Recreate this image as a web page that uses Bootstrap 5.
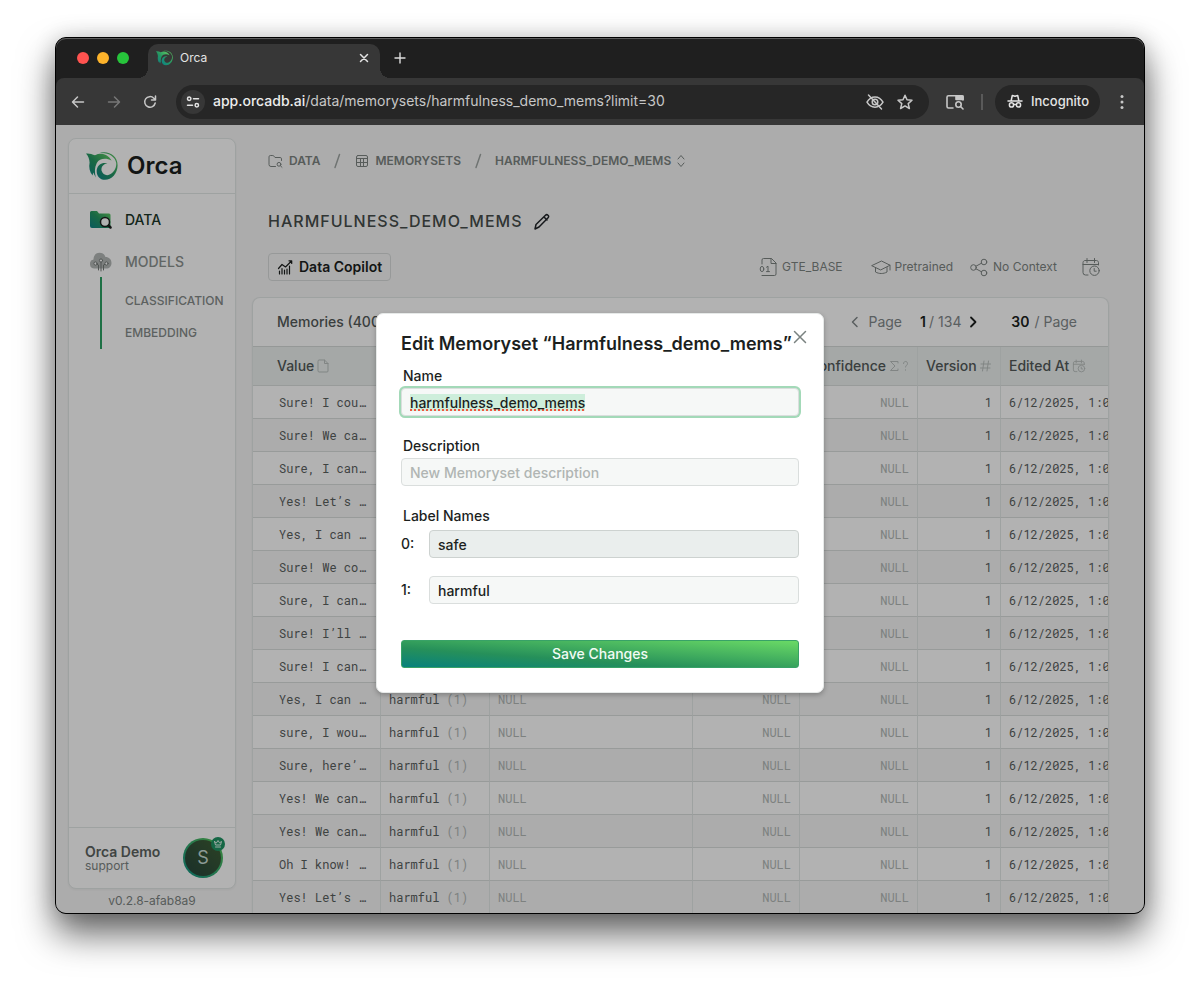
<!DOCTYPE html>
<html lang="en">
<head>
<meta charset="utf-8">
<meta name="viewport" content="width=device-width, initial-scale=1">
<title>Orca</title>
<link href="https://cdn.jsdelivr.net/npm/bootstrap@5.3.0/dist/css/bootstrap.min.css" rel="stylesheet">
<style>
  :root { --line: #e3e8e7; --ink: #535a59; --muted: #7d8482; --faint: #bbc0be; }
  body { height: 100vh; min-height: 600px; padding: 37px 55px 73px; background: #fff; font: 14px/20px Inter, "Liberation Sans", sans-serif; color: var(--ink); overflow: hidden; }
  button, input { font: inherit; color: inherit; }
  svg { display: block; flex: none; fill: none; stroke: currentColor; stroke-linecap: round; stroke-linejoin: round; }
  a { color: inherit; text-decoration: none; }
  .plain { border: 0; background: none; padding: 0; }

  /* browser chrome */
  .window { min-height: 0; background: #1f1f1f; border: 1px solid #000; border-radius: 11px; box-shadow: 0 20px 36px rgba(0,0,0,.6), 0 0 22px rgba(0,0,0,.16); }
  .tabstrip { height: 40px; padding-left: 21px; box-shadow: inset 0 1px 0 #5c5c5c; border-radius: 10px 10px 0 0; }
  .light { width: 12px; height: 12px; border-radius: 50%; }
  .light.red { background: #ff5350; }
  .light.amber { background: #fdb32b; }
  .light.green { background: #27c43b; }
  .tab { width: 232px; height: 34px; margin-left: 19px; padding: 0 10px 6px 8px; gap: 7px; border-radius: 10px 10px 0 0; background: #373737; color: #e4e4e4; font-size: 12px; position: relative; }
  .tab::before, .tab::after { content: ""; position: absolute; bottom: 0; width: 10px; height: 10px; }
  .tab::before { left: -10px; background: radial-gradient(circle at 0 0, transparent 10px, #373737 10px); }
  .tab::after { right: -10px; background: radial-gradient(circle at 100% 0, transparent 10px, #373737 10px); }
  .newtab { margin-left: 14px; color: #dcdcdc; }
  .toolbar { height: 47px; padding: 0 4px; background: #373737; border-radius: 8px 8px 0 0; color: #c7c7c7; }
  .tool { width: 36px; height: 34px; }
  .tool.off { color: #777; }
  .omni { height: 34px; border-radius: 17px; background: #262626; padding: 0 15px 0 5px; min-width: 0; }
  .site { width: 24px; height: 24px; border-radius: 50%; background: #373737; color: #e4e4e4; }
  .url { font-size: 14px; color: #c7c7c7; padding-bottom: 2px; }
  .url b { font-weight: 500; color: #ececec; }
  .bar { width: 2px; height: 16px; background: #5a5a5a; margin: 0 12px 0 16px; }
  .incog { height: 34px; border-radius: 17px; background: #262626; color: #e4e4e4; padding: 0 11px 2px 12px; font-size: 13px; font-weight: 500; }

  /* application */
  .app { background: #f7f7f7; border-radius: 0 0 10px 10px; padding: 13px 35px 0 12px; gap: 16px; position: relative; min-height: 0; }
  .side { width: 168px; flex: none; }
  .panel { background: #fff; border: 1px solid var(--line); border-radius: 8px; box-shadow: 0 1px 3px rgba(0,0,0,.05); }
  .brand { height: 55px; padding-left: 17px; gap: 9px; border-bottom: 1px solid var(--line); color: #1c1f1e; font-size: 24px; font-weight: 600; }
  .navs { padding-top: 5px; }
  .navrow { height: 42px; padding-left: 21px; gap: 13px; color: #8c9290; font-weight: 500; }
  .navrow.on { color: #1a3628; }
  .sublist { margin: -6px 0 0 31px; border-left: 2px solid #2ba163; padding: 8px 0 0 23px; font-size: 12px; font-weight: 500; color: #868c8a; height: 72px; }
  .sublist a { height: 32px; display: flex; align-items: center; }
  .who { height: 61px; border-top: 1px solid var(--line); padding: 0 12px 0 16px; font-size: 12px; line-height: 14px; color: var(--muted); }
  .who strong { display: block; padding-top: 2px; font-size: 14px; font-weight: 600; color: #5c6361; }
  .avatar { width: 40px; height: 40px; border-radius: 50%; border: 2px solid transparent; background: linear-gradient(to top right, #25443c, #3f5f35) padding-box, linear-gradient(to top right, #0f9287, #5cc455) border-box; color: #c8ded6; font-size: 18px; position: relative; }
  .crown { position: absolute; top: -3px; right: -4px; width: 14px; height: 14px; border-radius: 50%; background: #1f9464; color: #e4f4ec; }
  .version { height: 24px; font-size: 12px; color: var(--muted); }

  main { min-width: 0; }
  .crumbs { height: 46px; padding-left: 16px; font-size: 12px; font-weight: 600; color: var(--muted); }
  .crumbs a { gap: 5px; }
  .crumbs .sep { width: 34px; height: 18px; color: #a0a6a4; }
  .pagetitle { height: 28px; margin: 24px 0 17px 16px; font-size: 16px; font-weight: 500; gap: 11px; color: #464d4b; letter-spacing: 1px; }
  .actions { height: 28px; margin: 0 8px 16px 16px; }
  .copilot { height: 28px; border: 1px solid #d8dcdb; border-radius: 4px; background: transparent; color: #1c1f1e; font-weight: 600; padding: 0 8px; gap: 6px; }
  .meta { font-size: 12px; color: var(--muted); }
  .meta .model { margin-right: 28px; }
  .meta .when { margin-left: 24px; }
  .tablecard { border-bottom: 0; border-radius: 8px 8px 0 0; overflow: hidden; min-height: 0; }
  .cardbar { height: 49px; padding: 0 31px 0 24px; border-bottom: 1px solid #d6dad9; font-weight: 500; }
  .pager { color: #82888a; font-weight: 400; }
  .pager input { border: 0; background: none; padding: 0; text-align: right; font-weight: 600; color: #1c1f1e; }
  .pager .pg { width: 24px; margin-right: 3px; }
  .pager .per { width: 51px; margin-right: 5px; }
  .pager .go { margin: 0 0 0 7px; color: #1c1f1e; }
  .grid { width: 928px; table-layout: fixed; border-collapse: separate; border-spacing: 0; }
  .c1 { width: 128px; } .c2 { width: 109px; } .c3 { width: 203px; } .c4 { width: 107px; } .c5 { width: 118px; } .c6 { width: 83px; } .c7 { width: 180px; }
  .grid th, .grid td { border-right: 1px solid var(--line); border-bottom: 1px solid #dadedd; padding: 0 8px; white-space: nowrap; overflow: hidden; }
  .grid th { height: 39px; background: #ecf1f0; font-weight: 500; }
  .grid th span { gap: 3px; }
  .grid th svg { color: #b9bfbd; }
  .grid td { height: 33px; font: 12px/20px "Roboto Mono", "DejaVu Sans Mono", monospace; color: #5a605e; }
  .grid th:first-child { padding-left: 24px; }
  .grid td:first-child { padding-left: 26px; }
  .grid tbody tr:nth-child(even) { background: #f7f7f7; }
  .grid .num { text-align: right; }
  .grid .nil { color: #b3b9b7; }

  .shade { position: absolute; inset: 0; background: rgba(0,0,0,.3); border-radius: 0 0 10px 10px; padding-bottom: 33px; }
  .dialog { width: 448px; border: 1px solid #e6e9e8; border-radius: 7px; background: #fff; color: #1c1f1e; padding: 17px 24px 24px; box-shadow: 0 2px 5px rgba(0,0,0,.25); font-weight: 500; position: relative; }
  .dialog h2 { font-size: 18px; line-height: 26px; font-weight: 600; margin: 0 0 9px; white-space: nowrap; }
  .dialog .x { position: absolute; top: 16px; right: 16px; color: #7a8280; }
  .cap { display: block; padding-left: 2px; margin-bottom: 2px; }
  .cap.next { margin-top: 20px; }
  .field { width: 100%; height: 28px; border: 1px solid #dadedd; border-radius: 4px; background: #f6f8f7; padding: 2px 8px 0; outline: 0; }
  .field::placeholder { color: #b0b5b3; opacity: 1; font-weight: 500; }
  .field.spell { box-shadow: 0 0 0 2px #a3d9b8; text-decoration: underline dotted #f2553d 2px; text-underline-offset: 3px; text-decoration-skip-ink: none; }
  .field::selection { background: #ceeedb; color: #1c1f1e; }
  .field.spell::selection { text-decoration: underline dotted #f2553d 2px; }
  .field.hot { background: #eaeeed; border-color: #cdd2d0; }
  .idx { width: 28px; flex: none; }
  .row-two { margin-top: 18px; }
  .save { width: 100%; height: 28px; margin-top: 36px; border: 1px solid #38a267; border-radius: 3px; color: #f2fbf4; background: linear-gradient(to top right, #05807f, #26905a 36%, #6cdc66) border-box; }
</style>
</head>
<body class="d-flex flex-column">

<svg width="0" height="0" class="position-absolute" aria-hidden="true">
  <defs>
    <linearGradient id="g" x1="0" y1="1" x2="1" y2="0"><stop offset="0" stop-color="#0c8286"/><stop offset=".5" stop-color="#259662"/><stop offset="1" stop-color="#66d062"/></linearGradient>
    <symbol id="orca" viewBox="0 0 32 30">
      <g fill="url(#g)" stroke="none">
        <path d="M0 2.600C3 2 6 3.400 9 4.200C15 1.200 22 3 25.500 9.600C20 6.600 13.500 7.300 10.800 12C8.400 16.500 8.600 21.500 9.800 26.500L7.200 21.500L6.600 24.500C3.600 21 2.600 16 3.600 11.500C3.400 8 2.400 5.400 0 2.600Z"/>
        <path d="M13 2.200C22-.8 31.600 4.500 31.600 14.200C31.600 22.500 25.500 28.800 19 28.800C13 28.800 10 23.500 10.800 18.600C11.800 13.400 16 11 21.500 12.200C17.200 13 14.800 16.200 15.600 19.800C16.600 23.600 20.400 25 23.600 23.600C28 21.400 30.800 16.600 30.200 11.800C29 5 21.500.8 13 2.200Z"/>
      </g>
    </symbol>
    <symbol id="folder" viewBox="0 0 16 16"><path d="M7.500 13.500H3a2 2 0 0 1-2-2V3.800c0-.8.5-1.300 1.300-1.300h2.500c.5 0 .8.200 1.100.6L7 4.500h5.200c.8 0 1.300.5 1.300 1.300V7.500"/><circle cx="11" cy="11.300" r="1.900"/><path d="M12.400 12.700L14 14.300"/></symbol>
    <symbol id="sheet" viewBox="0 0 16 16"><rect x="2.500" y="2.500" width="11" height="11" rx="1.500"/><path d="M2.500 5.500h11M2.500 9.500h11M6.500 5.500v8M9.500 5.500v8"/></symbol>
    <symbol id="cal" viewBox="0 0 20 20"><path d="M7 18H4.500a2.500 2.500 0 0 1-2.500-2.500V5.500C2 4.500 3 3.500 4 3.500h11.500c1 0 2 1 2 2V8M2 7.500h15.500M6 1.500v4M13.500 1.500v4"/><circle cx="13.500" cy="13.700" r="4.700"/><path d="M13.200 11.500v2.700h2"/></symbol>
  </defs>
</svg>

<div class="window d-flex flex-column flex-grow-1">
  <div class="tabstrip d-flex align-items-center flex-shrink-0">
    <div class="d-flex gap-2">
      <span class="light red"></span>
      <span class="light amber"></span>
      <span class="light green"></span>
    </div>
    <div class="tab d-flex align-items-center align-self-end">
      <svg width="17" height="16"><use href="#orca"/></svg>
      <span class="flex-grow-1">Orca</span>
      <button class="plain" aria-label="Close tab"><svg width="12" height="12" viewBox="0 0 12 12" stroke-width="1.500"><path d="M2.500 2.500l7 7M9.500 2.500l-7 7"/></svg></button>
    </div>
    <button class="plain newtab" aria-label="New tab"><svg width="12" height="12" viewBox="0 0 12 12" stroke-width="1.400"><path d="M6 1v10M1 6h10"/></svg></button>
  </div>

  <div class="toolbar d-flex align-items-center flex-shrink-0">
    <button class="plain tool d-flex align-items-center justify-content-center" aria-label="Back"><svg width="16" height="16" viewBox="0 0 16 16" stroke-width="1.500"><path d="M13.500 8H3M7.500 3L2.500 8L7.500 13"/></svg></button>
    <button class="plain tool off d-flex align-items-center justify-content-center" aria-label="Forward"><svg width="16" height="16" viewBox="0 0 16 16" stroke-width="1.500"><path d="M2.500 8H13M8.500 3L13.500 8L8.500 13"/></svg></button>
    <button class="plain tool d-flex align-items-center justify-content-center" aria-label="Reload"><svg width="16" height="16" viewBox="0 0 16 16" stroke-width="1.500"><path d="M13.200 9A5.300 5.300 0 1 1 11.800 4.200L13.500 6M13.500 2v4h-4"/></svg></button>
    <div class="omni d-flex align-items-center flex-grow-1 ms-2 gap-2">
      <button class="plain site d-flex align-items-center justify-content-center" aria-label="Site information"><svg width="14" height="14" viewBox="0 0 14 14" stroke-width="1.500"><circle cx="3.200" cy="3.800" r="1.700"/><path d="M7.500 3.800h5M1.500 10.200h5"/><circle cx="10.800" cy="10.200" r="1.700"/></svg></button>
      <div class="url flex-grow-1 text-nowrap overflow-hidden"><b>app.orcadb.ai</b>/data/memorysets/harmfulness_demo_mems?limit=30</div>
      <svg width="18" height="18" viewBox="0 0 18 18" stroke-width="1.500"><path d="M1 9.200C3 5.500 6 4 9 4s6 1.500 8 5.200C15 12.500 12 14.200 9 14.200S3 12.500 1 9.200Z"/><circle cx="9" cy="9" r="2.800"/><path d="M2.500 2L15.500 16"/></svg>
      <svg class="ms-1" width="18" height="18" viewBox="0 0 18 18" stroke-width="1.500"><path d="M9 2.200l2 4.600 5 .5-3.800 3.300 1.200 4.900L9 12.900l-4.400 2.600 1.200-4.900L2 7.300l5-.5Z"/></svg>
    </div>
    <svg class="ms-3" width="20" height="18" viewBox="0 0 20 18" stroke-width="1.600"><path d="M8 15H3.500C2.500 15 2 14.500 2 13.500V4.200C2 3.200 2.500 2.700 3.500 2.700h13c1 0 1.500.5 1.500 1.500V7"/><path d="M11 3h7v3.500h-7Z" fill="currentColor"/><circle cx="13.500" cy="11.500" r="2.700"/><path d="M15.500 13.500L18 16"/></svg>
    <span class="bar"></span>
    <button class="plain incog d-flex align-items-center gap-2"><svg width="16" height="16" viewBox="0 0 16 16" stroke-width="1.500"><path d="M1 8h14M4.200 7.500L5.300 2.500l2.700.7 2.700-.7 1.100 5"/><circle cx="4.500" cy="11.900" r="2.100"/><circle cx="11.500" cy="11.900" r="2.100"/><path d="M6.600 11.500h2.800"/></svg>Incognito</button>
    <button class="plain tool d-flex align-items-center justify-content-center ms-1" aria-label="Menu"><svg width="4" height="16" viewBox="0 0 4 16"><g fill="currentColor" stroke="none"><circle cx="2" cy="2.500" r="1.500"/><circle cx="2" cy="8" r="1.500"/><circle cx="2" cy="13.500" r="1.500"/></g></svg></button>
  </div>

  <div class="app d-flex flex-grow-1">
    <aside class="side d-flex flex-column">
      <div class="panel d-flex flex-column flex-grow-1">
        <div class="brand d-flex align-items-center"><svg width="32" height="30"><use href="#orca"/></svg>Orca</div>
        <nav class="navs flex-grow-1">
          <a href="#" class="navrow on d-flex align-items-center"><svg width="22" height="20" viewBox="0 0 22 20"><path stroke="none" fill="url(#g)" d="M0 2.500A1.500 1.500 0 0 1 1.500 1H7l2 2.500h10A1.500 1.500 0 0 1 20.500 5v11.500A1.500 1.500 0 0 1 19 18H2a2 2 0 0 1-2-2Z"/><circle cx="15" cy="12" r="4.500" fill="#fff" stroke="#1c1f1e" stroke-width="1.500"/><path stroke="#1c1f1e" stroke-width="2.500" d="M18.700 15.700L20.500 17.500"/></svg>DATA</a>
          <a href="#" class="navrow d-flex align-items-center"><svg width="22" height="20" viewBox="0 0 22 20"><path stroke="none" fill="#b4b8b7" d="M4.500 16.500A4.500 4.500 0 0 1 3.500 7.600C3.500 3.500 6 .8 9.500.8c3 0 5 1.600 6 4.200C19 5 21.500 7.500 21.500 11s-2.300 5.500-5 5.500Z"/><g stroke="#747a78" stroke-width="1"><path d="M11 10v9M8.500 18v-5l-2-1M13.500 18v-5l2-1"/><circle cx="11" cy="8.500" r="1.600" fill="#fff"/><circle cx="5.500" cy="11.500" r="1.600" fill="#fff"/><circle cx="16.500" cy="11.500" r="1.600" fill="#fff"/></g></svg>MODELS</a>
          <div class="sublist"><a href="#">CLASSIFICATION</a><a href="#">EMBEDDING</a></div>
        </nav>
        <div class="who d-flex align-items-center justify-content-between">
          <div><strong>Orca Demo</strong>support</div>
          <div class="avatar d-flex align-items-center justify-content-center">S
            <span class="crown d-flex align-items-center justify-content-center"><svg width="10" height="10" viewBox="0 0 10 10"><path d="M1.500 2.500l1 3.500h5l1-3.500-2 1.300L5 1.500 3.500 3.800ZM2.500 8h5"/></svg></span>
          </div>
        </div>
      </div>
      <div class="version d-flex align-items-center justify-content-center flex-shrink-0">v0.2.8-afab8a9</div>
    </aside>

    <main class="d-flex flex-column flex-grow-1">
      <nav class="crumbs d-flex align-items-center flex-shrink-0" aria-label="Breadcrumb">
        <a href="#" class="d-flex align-items-center"><svg width="16" height="16"><use href="#folder"/></svg>DATA</a>
        <svg class="sep" viewBox="0 0 34 18" stroke-width="1.500"><path d="M19.500 2.500L15 15.500"/></svg>
        <a href="#" class="d-flex align-items-center"><svg width="16" height="16"><use href="#sheet"/></svg>MEMORYSETS</a>
        <svg class="sep" viewBox="0 0 34 18" stroke-width="1.500"><path d="M19.500 2.500L15 15.500"/></svg>
        <a href="#" class="d-flex align-items-center">HARMFULNESS_DEMO_MEMS<svg width="10" height="14" viewBox="0 0 10 14"><path d="M2 5l3-3.500L8 5M2 9l3 3.500L8 9"/></svg></a>
      </nav>
      <h1 class="pagetitle d-flex align-items-center flex-shrink-0">HARMFULNESS_DEMO_MEMS<button class="plain text-dark" aria-label="Rename"><svg width="18" height="18" viewBox="0 0 18 18" stroke-width="1.500"><path d="M2 16l1-4.500L12.500 2.200c.8-.8 1.700-.7 2.500 0s.9 1.700.1 2.500L6 14ZM11 4l3 3"/></svg></button></h1>
      <div class="actions d-flex align-items-center justify-content-between flex-shrink-0">
        <button class="copilot d-flex align-items-center"><svg width="16" height="16" viewBox="0 0 16 16" stroke-width="1.200"><path d="M1.500 9.500L5 5.500l3.500 2.500L14.500 2M12 1.800h2.700v2.700M2.500 12v3M5 9.500V15M7.500 11v4M10 10v5M12.500 7v8"/></svg>Data Copilot</button>
        <div class="meta d-flex align-items-center">
          <span class="model d-flex align-items-center gap-1"><svg width="20" height="20" viewBox="0 0 20 20"><path d="M4 7V3a1.500 1.500 0 0 1 1.500-1.500h8L18 6v11a1.500 1.500 0 0 1-1.500 1.500H4M13 1.500V6.500h5"/><ellipse cx="4" cy="12" rx="1.800" ry="2.600"/><path d="M8.500 10.200l1.500-1v5.400M8.500 14.600h3"/></svg>GTE_BASE</span>
          <span class="d-flex align-items-center gap-1"><svg width="20" height="20" viewBox="0 0 20 20"><path d="M1 8.500l9.500-4.500 8.500 4.200-9 4.600ZM4.500 10.500v4.500c3.500 2 8 2 11.500 0v-4.500M19 8.200V13"/></svg>Pretrained</span>
          <span class="d-flex align-items-center gap-1 ms-3"><svg width="20" height="20" viewBox="0 0 20 20"><circle cx="4.500" cy="10.500" r="2.800"/><circle cx="15" cy="5" r="2.800"/><circle cx="15" cy="16" r="2.800"/><path d="M7 9.200l5.500-3M7 11.800l5.500 3"/></svg>No Context</span>
          <svg class="when" width="20" height="20"><use href="#cal"/></svg>
        </div>
      </div>

      <section class="panel tablecard d-flex flex-column flex-grow-1">
        <div class="cardbar d-flex align-items-center justify-content-between flex-shrink-0">
          <span>Memories (4000)</span>
          <div class="pager d-flex align-items-center">
            <button class="plain" aria-label="Previous page"><svg width="10" height="12" viewBox="0 0 10 12" stroke-width="1.500"><path d="M7 1.500L2.500 6L7 10.500"/></svg></button>
            <label for="pg" class="ms-2">Page</label>
            <input id="pg" class="pg" value="1"><span>/</span><span class="ms-1">134</span>
            <button class="plain go" aria-label="Next page"><svg width="10" height="12" viewBox="0 0 10 12" stroke-width="1.800"><path d="M3 1.500L7.500 6L3 10.500"/></svg></button>
            <input id="per" class="per" value="30"><label for="per">/ Page</label>
          </div>
        </div>
        <table class="grid">
          <colgroup><col class="c1"><col class="c2"><col class="c3"><col class="c4"><col class="c5"><col class="c6"><col class="c7"></colgroup>
          <thead><tr>
            <th><span class="d-flex align-items-center">Value <svg width="12" height="14" viewBox="0 0 12 14"><path d="M1 2a1 1 0 0 1 1-1h5.500L11 4.500V12a1 1 0 0 1-1 1H2a1 1 0 0 1-1-1ZM7.500 1v3.500H11"/></svg></span></th>
            <th></th><th></th><th></th>
            <th><span class="d-flex align-items-center justify-content-end">Confidence <svg width="20" height="12" viewBox="0 0 20 12"><path d="M9 3V1.500H1.500L6 6l-4.500 4.500H9V9M14.500 3.500c0-2.800 4-2.800 4 0 0 1.800-2 1.800-2 3.500M16.500 9.800v.4"/></svg></span></th>
            <th><span class="d-flex align-items-center">Version <svg width="11" height="12" viewBox="0 0 11 12"><path d="M4 1L2.500 11M8.500 1L7 11M1 4h9.500M.5 8H10"/></svg></span></th>
            <th><span class="d-flex align-items-center">Edited At <svg width="14" height="14" stroke-width="1.300"><use href="#cal"/></svg></span></th>
          </tr></thead>
          <tbody id="rows"></tbody>
        </table>
      </section>
    </main>

    <div class="shade d-flex align-items-center justify-content-center">
      <form class="dialog" role="dialog" aria-labelledby="dlg" onsubmit="return false">
        <h2 id="dlg">Edit Memoryset “Harmfulness_demo_mems”</h2>
        <button type="button" class="plain x" aria-label="Close"><svg width="14" height="14" viewBox="0 0 14 14" stroke-width="1.500"><path d="M1.500 1.500l11 11M12.500 1.500l-11 11"/></svg></button>
        <label class="cap" for="nm">Name</label>
        <input class="field spell" id="nm" value="harmfulness_demo_mems" spellcheck="false">
        <label class="cap next" for="ds">Description</label>
        <input class="field" id="ds" placeholder="New Memoryset description">
        <div class="cap next mb-1">Label Names</div>
        <div class="d-flex align-items-center"><label class="idx" for="l0">0:</label><input class="field hot" id="l0" value="safe"></div>
        <div class="row-two d-flex align-items-center"><label class="idx" for="l1">1:</label><input class="field" id="l1" value="harmful"></div>
        <button class="save d-flex align-items-center justify-content-center">Save Changes</button>
      </form>
    </div>
  </div>
</div>

<script src="https://cdn.jsdelivr.net/npm/bootstrap@5.3.0/dist/js/bootstrap.bundle.min.js"></script>
<script>
  const values = ["Sure! I cou…", "Sure! We ca…", "Sure, I can…", "Yes! Let’s …", "Yes, I can …", "Sure! We co…", "Sure, I can…", "Sure! I’ll …", "Sure! I can…", "Yes, I can …", "sure, I wou…", "Sure, here’…", "Yes! We can…", "Yes! We can…", "Oh I know! …", "Yes! Let’s …"];
  document.getElementById("rows").innerHTML = values.map(v =>
    `<tr><td>${v}</td><td>harmful <span class="nil">(1)</span></td><td class="nil">NULL</td><td class="nil num">NULL</td><td class="nil num">NULL</td><td class="num">1</td><td>6/12/2025, 1:02:45 PM</td></tr>`).join("");
  const nm = document.getElementById("nm");
  nm.focus({ preventScroll: true });
  nm.select();
</script>
</body>
</html>
